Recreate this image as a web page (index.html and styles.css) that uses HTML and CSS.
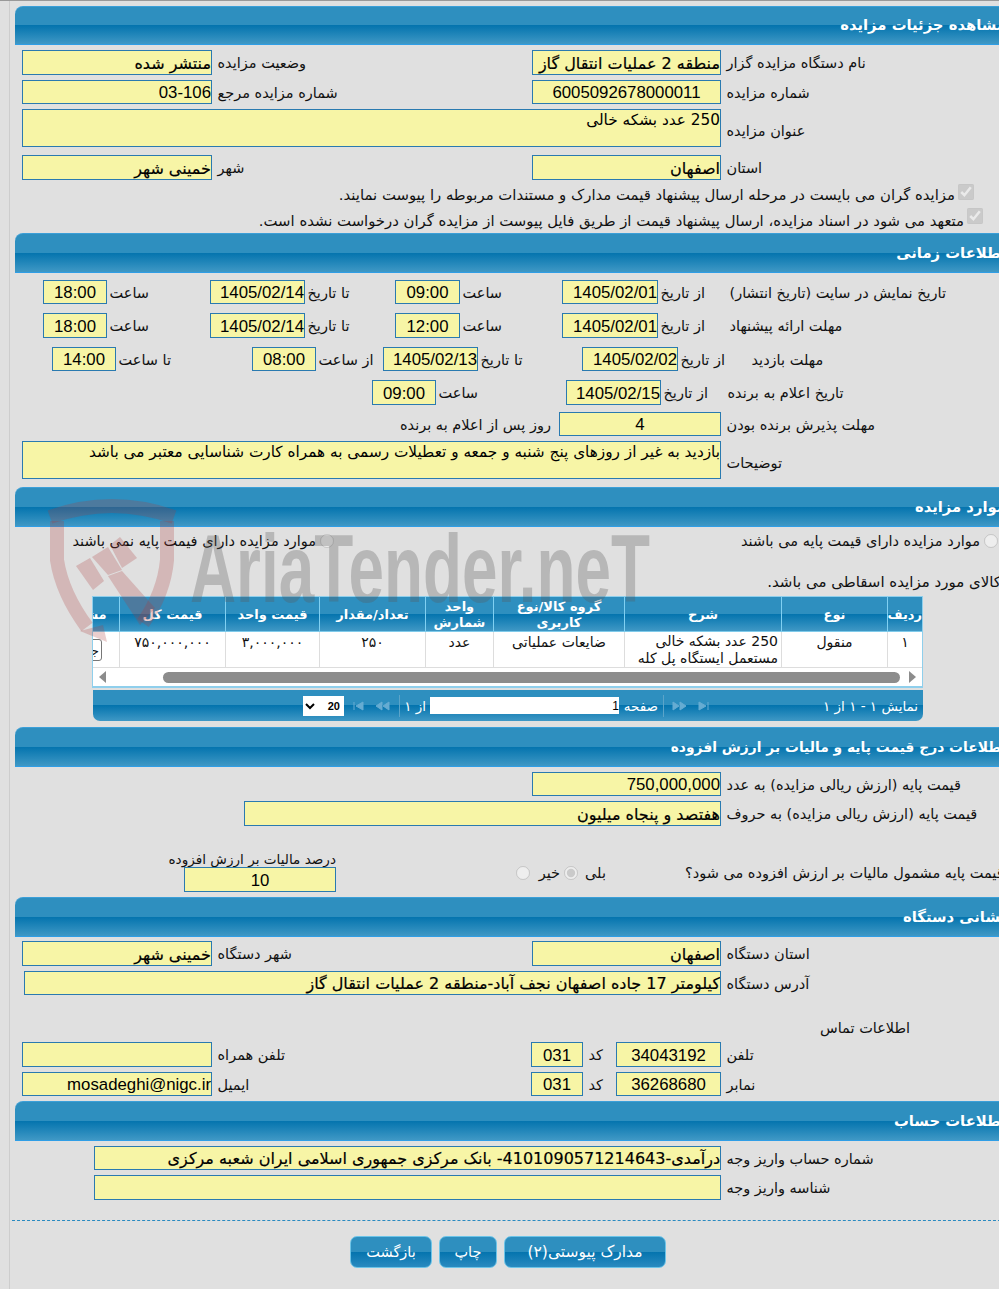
FILE: index.html
```html
<!DOCTYPE html>
<html lang="fa">
<head>
<meta charset="utf-8">
<title>مشاهده جزئیات مزایده</title>
<link rel="stylesheet" href="styles.css">
</head>
<body>
<div class="frame">
<main class="page">

<section class="sec sec1">
  <h2 class="hdr hdr1">مشاهده جزئیات مزایده</h2>
  <div class="row main h25 mt5"><div class="val fa bold">منتشر شده</div><label class="lb">وضعیت مزایده</label><div class="val fa bold">منطقه 2 عملیات انتقال گاز</div><label class="lb">نام دستگاه مزایده گزار</label></div>
  <div class="row main h24 mt5"><div class="val en">03-106</div><label class="lb">شماره مزایده مرجع</label><div class="val en c">6005092678000011</div><label class="lb">شماره مزایده</label></div>
  <div class="row wide h38 mt5"><div class="val fa top">250 عدد بشکه خالی</div><label class="lb low">عنوان مزایده</label></div>
  <div class="row main h25 mt8"><div class="val fa bold">خمینی شهر</div><label class="lb">شهر</label><div class="val fa bold">اصفهان</div><label class="lb">استان</label></div>
  <div class="chk chk1"><input type="checkbox" checked disabled><span>مزایده گران می بایست در مرحله ارسال پیشنهاد قیمت مدارک و مستندات مربوطه را پیوست نمایند.</span></div>
  <div class="chk chk2"><input type="checkbox" checked disabled><span>متعهد می شود در اسناد مزایده، ارسال پیشنهاد قیمت از طریق فایل پیوست از مزایده گران درخواست نشده است.</span></div>
</section>

<section class="sec">
  <h2 class="hdr">اطلاعات زمانی</h2>
  <div class="row t1 h24 mt7"><div class="val en c">18:00</div><label class="lb s">ساعت</label><div class="val en">1405/02/14</div><label class="lb s">تا تاریخ</label><div class="val en c">09:00</div><label class="lb s">ساعت</label><div class="val en">1405/02/01</div><label class="lb s">از تاریخ</label><label class="lb">تاریخ نمایش در سایت (تاریخ انتشار)</label></div>
  <div class="row t1 h25 mt9"><div class="val en c">18:00</div><label class="lb s">ساعت</label><div class="val en">1405/02/14</div><label class="lb s">تا تاریخ</label><div class="val en c">12:00</div><label class="lb s">ساعت</label><div class="val en">1405/02/01</div><label class="lb s">از تاریخ</label><label class="lb">مهلت ارائه پیشنهاد</label></div>
  <div class="row t3 h24 mt9"><div class="val en c">14:00</div><label class="lb s">تا ساعت</label><div class="val en c">08:00</div><label class="lb s">از ساعت</label><div class="val en">1405/02/13</div><label class="lb s">تا تاریخ</label><div class="val en">1405/02/02</div><label class="lb s">از تاریخ</label><label class="lb">مهلت بازدید</label></div>
  <div class="row t4 h25 mt9"><div class="val en c">09:00</div><label class="lb s">ساعت</label><div class="val en">1405/02/15</div><label class="lb s">از تاریخ</label><label class="lb">تاریخ اعلام به برنده</label></div>
  <div class="row t5 h24 mt7"><label class="lb right">روز پس از اعلام به برنده</label><div class="val en c">4</div><label class="lb">مهلت پذیرش برنده بودن</label></div>
  <div class="row wide h38 mt5"><div class="val fa top">بازدید به غیر از روزهای پنج شنبه و جمعه و تعطیلات رسمی به همراه کارت شناسایی معتبر می باشد</div><label class="lb low">توضیحات</label></div>
</section>

<section class="sec sec3">
  <h2 class="hdr">موارد مزایده</h2>
  <div class="radios"><span class="rd rd-no"><input type="radio" disabled><span>موارد مزایده دارای فیمت پایه نمی باشند</span></span><span class="rd rd-yes"><input type="radio" disabled><span>موارد مزایده دارای قیمت پایه می باشند</span></span></div>
  <p class="scrap">کالای مورد مزایده اسقاطی می باشد.</p>
  <div class="grid-wrap">
    <table class="grid">
      <colgroup><col class="c1"><col class="c2"><col class="c3"><col class="c4"><col class="c5"><col class="c6"><col class="c7"><col class="c8"><col class="c9"></colgroup>
      <thead><tr><th>ردیف</th><th>نوع</th><th>شرح</th><th>گروه کالا/نوع کاربری</th><th>واحد شمارش</th><th>تعداد/مقدار</th><th>قیمت واحد</th><th>قیمت کل</th><th>مشاهده</th></tr></thead>
      <tbody><tr><td>۱</td><td>منقول</td><td class="desc">250 عدد بشکه خالی مستعمل ایستگاه پل کله</td><td>ضایعات عملیاتی</td><td>عدد</td><td>۲۵۰</td><td>۳,۰۰۰,۰۰۰</td><td>۷۵۰,۰۰۰,۰۰۰</td><td class="act"><button class="mini" disabled>جزئیات</button></td></tr></tbody>
    </table>
    <div class="scroll"><i class="arr arr-l"></i><i class="thumb"></i><i class="arr arr-r"></i></div>
  </div>
  <div class="pager">
    <select class="psize" dir="rtl"><option>20</option></select>
    <svg class="pic p1" viewBox="0 0 37 10"><path d="M1 1v8M10 1 3 5l7 4zM29 1l-6 4 6 4zM36 1l-6 4 6 4z"/></svg>
    <i class="psep s1"></i>
    <span class="ptx of">از ۱</span>
    <input class="pnum" value="1" dir="rtl" readonly>
    <span class="ptx pg">صفحه</span>
    <i class="psep s2"></i>
    <svg class="pic p2" viewBox="0 0 40 10"><path d="m1 1 6 4-6 4zM8 1l6 4-6 4zM27 1l7 4-7 4zM36 1v8"/></svg>
    <span class="ptx info">نمایش ۱ - ۱ از ۱</span>
  </div>
</section>

<section class="sec sec4">
  <h2 class="hdr hdr-long">اطلاعات درج قیمت پایه و مالیات بر ارزش افزوده</h2>
  <div class="row r-num h24 mt5"><div class="val en">750,000,000</div><label class="lb">قیمت پایه (ارزش ریالی مزایده) به عدد</label></div>
  <div class="row r-word h25 mt5"><div class="val fa bold">هفتصد و پنجاه میلیون</div><label class="lb">قیمت پایه (ارزش ریالی مزایده) به حروف</label></div>
  <div class="taxrow">
    <div class="tax"><label class="taxl">درصد مالیات بر ارزش افزوده</label><div class="val en c taxv">10</div></div>
    <div class="yn"><input type="radio" name="vat" disabled><span class="no">خیر</span><input type="radio" name="vat" checked disabled><span class="yes">بلی</span></div>
    <label class="lb q">قیمت پایه مشمول مالیات بر ارزش افزوده می شود؟</label>
  </div>
</section>

<section class="sec sec5">
  <h2 class="hdr">نشانی دستگاه</h2>
  <div class="row main h25 mt4"><div class="val fa bold">خمینی شهر</div><label class="lb">شهر دستگاه</label><div class="val fa bold">اصفهان</div><label class="lb">استان دستگاه</label></div>
  <div class="row addr h24 mt5"><div class="val fa bold">کیلومتر 17 جاده اصفهان نجف آباد-منطقه 2 عملیات انتقال گاز</div><label class="lb">آدرس دستگاه</label></div>
  <p class="contact">اطلاعات تماس</p>
  <div class="row tel h25 mt4"><div class="val"></div><label class="lb">تلفن همراه</label><div class="val en c">031</div><label class="lb">کد</label><div class="val en c">34043192</div><label class="lb">تلفن</label></div>
  <div class="row tel h24 mt5"><div class="val en">mosadeghi@nigc.ir</div><label class="lb">ایمیل</label><div class="val en c">031</div><label class="lb">کد</label><div class="val en c">36268680</div><label class="lb">نمابر</label></div>
</section>

<section class="sec sec5">
  <h2 class="hdr">اطلاعات حساب</h2>
  <div class="row acc h24 mt5"><div class="val fa bold">درآمدی-4101090571214643- بانک مرکزی جمهوری اسلامی ایران شعبه مرکزی</div><label class="lb">شماره حساب واریز وجه</label></div>
  <div class="row acc h25 mt5"><div class="val"></div><label class="lb">شناسه واریز وجه</label></div>
</section>

<hr class="dash">
<nav class="btns"><button class="btn b1">بازگشت</button><button class="btn b2">چاپ</button><button class="btn b3">مدارک پیوستی(۲)</button></nav>
</main>

<svg class="mark" viewBox="0 0 620 150" aria-hidden="true">
  <path class="m-line" d="M17 26V65Q22 98 47 132"/>
  <path class="m-line" d="M127 26V65Q124 98 103 128"/>
  <path class="m-line" d="M10 22Q72 0 134 22"/>
  <path class="m-fill" d="M40 136 67 147 63 130Z"/>
  <path class="m-fill" d="M36 71 50 63 64 86 53 95Z"/>
  <path class="m-fill" d="M52 62 68 52 82 75 68 80Z"/>
  <path class="m-fill" d="M70 50 80 42 97 63 82 73Z"/>
  <path class="m-fill" d="M68 81 82 76 115 113 100 130Z"/>
  <text class="m-text" x="150" y="107" textLength="460" lengthAdjust="spacingAndGlyphs">AriaTender.neT</text>
</svg>
</div>
</body>
</html>
```
FILE: styles.css
```css
* { box-sizing: border-box; }
html, body { margin: 0; padding: 0; height: 100%; overflow: hidden; background: #e0e0e0; }
body { font-family: "DejaVu Sans", sans-serif; font-size: 14.5px; color: #111; }
.frame { position: relative; width: 999px; height: 1289px; overflow: hidden; border-top: 1px solid #999; }
.frame::before { content: ""; position: absolute; left: 9px; top: 0; bottom: 0; width: 1px; background: #cdcdcd; }
.page { position: relative; width: 1006px; padding-left: 15px; }

.sec1 { margin-top: 5px; }
.sec3 { margin-top: 8px; }
.sec4 { margin-top: 6px; }
.sec5 { margin-top: 5px; }

.hdr {
  margin: 0; height: 40px; padding: 9px 0 0; font-size: 14.8px; line-height: 20px; font-weight: bold; color: #fff;
  direction: rtl; text-align: right; white-space: nowrap;
  border-top: 1px solid #3b9fd8; border-bottom: 1px solid #2f9ee6; border-top-left-radius: 8px;
  background: linear-gradient(#2e8fbf 0, #2e8fbf 50%, #0474ae 50%, #3f98c5 100%);
}
.hdr1 { height: 39px; padding-top: 8px; }
.hdr-long { font-size: 13.85px; }

.row { display: grid; align-items: stretch; margin-left: -15px; }
.h24 { height: 24px; } .h25 { height: 25px; } .h38 { height: 38px; }
.mt4 { margin-top: 4px; } .mt5 { margin-top: 5px; } .mt7 { margin-top: 7px; } .mt8 { margin-top: 8px; } .mt9 { margin-top: 9px; }

.main { padding-left: 22px; grid-template-columns: 190px 320px 189px 1fr; }
.wide { padding-left: 22px; grid-template-columns: 699px 1fr; }
.t1 { padding-left: 43px; grid-template-columns: 64px 103px 95px 90px 65px 102px 96px 66px 1fr; }
.t3 { padding-left: 52px; grid-template-columns: 64px 136px 64px 67px 95px 104px 96px 68px 1fr; }
.t4 { padding-left: 372px; grid-template-columns: 64px 130px 95px 61px 1fr; }
.t5 { padding-left: 402px; grid-template-columns: 157px 162px 1fr; }
.r-num { padding-left: 532px; grid-template-columns: 189px 1fr; }
.r-word { padding-left: 244px; grid-template-columns: 477px 1fr; }
.addr { padding-left: 24px; grid-template-columns: 697px 1fr; }
.tel { padding-left: 22px; grid-template-columns: 190px 319px 52px 33px 105px 1fr; }
.acc { padding-left: 94px; grid-template-columns: 627px 1fr; }

.val {
  direction: rtl; display: flex; align-items: center; justify-content: flex-start; overflow: hidden; white-space: nowrap;
  background: #f7f5a6; border: 1px solid #2a7ab0; color: #000; line-height: 1;
}
.en { font-family: "Liberation Sans", sans-serif; font-size: 16.8px; padding-top: 3px; }
.fa { font-size: 15.3px; }
.bold { font-size: 16px; padding-top: 2px; -webkit-text-stroke: 0.2px #000; }
.c { justify-content: center; }
.top { align-items: flex-start; padding-top: 3px; }
.lb { direction: rtl; text-align: left; align-self: center; padding: 1px 0 0 5.5px; white-space: nowrap; font-size: 14.5px; line-height: 18px; }
.lb.s { padding-left: 2.5px; }
.lb.right { text-align: right; padding: 1px 8px 0 0; }
.lb.low { padding-top: 6px; }

.chk { display: flex; direction: rtl; align-items: center; white-space: nowrap; margin-left: -15px; font-size: 14.85px; }
.chk input { width: 16px; height: 16px; margin: 0; }
.chk1 { height: 26px; margin-top: 2px; padding-right: 32px; }
.chk1 input { margin-bottom: 6px; }
.chk1 span { margin-right: 3px; }
.chk2 { height: 25px; padding-right: 23px; }
.chk2 input { margin-bottom: 9px; }
.chk2 span { margin-right: 3px; }

.radios { display: flex; height: 20px; margin: 4px 0 1px -15px; padding-left: 68px; align-items: center; }
.rd { display: flex; direction: rtl; align-items: center; white-space: nowrap; }
.rd input { margin: 0 0 0 4px; width: 14px; height: 14px; }
.rd-no { width: 266px; }
.rd-yes { margin-left: 407px; }
.scrap { margin: 21px 0 0; height: 20px; padding-right: 5px; line-height: 20px; font-size: 15px; direction: rtl; text-align: right; white-space: nowrap; }

.grid-wrap { direction: rtl; margin: 4px 0 0 77px; width: 831px; border: 1px solid #8fcfec; border-width: 1px 1px 0 1px; overflow: hidden; background: #fff; }
.grid { border-collapse: separate; border-spacing: 0; table-layout: fixed; width: 879px; }
.c1 { width: 35px; } .c2 { width: 106px; } .c3 { width: 157px; } .c4 { width: 131px; } .c5 { width: 68px; }
.c6 { width: 106px; } .c7 { width: 94px; } .c8 { width: 106px; } .c9 { width: 76px; }
.grid th {
  height: 35px; padding: 1px 3px 0; color: #fff; font-size: 13px; line-height: 16px; font-weight: bold; text-align: center;
  border-left: 1px solid #80d0f2; border-bottom: 1px solid #7fcaea; background: linear-gradient(#2e8fbf 0, #2e8fbf 50%, #0474ae 50%, #3f98c5 100%);
}
.grid th:first-child { padding: 1px 0 0 4px; }
.grid td { height: 35px; padding: 2px 3px 0; font-size: 14px; line-height: 17px; text-align: center; vertical-align: top; border-left: 1px solid #ddd; border-bottom: 1px solid #ddd; background: #fff; }
.grid td.desc { text-align: right; padding-top: 1px; }
.grid td.act { text-align: right; padding: 0; }
.mini { height: 22px; width: 60px; margin: 7px 17px 0 0; padding: 0 2px 0 0; font: 13px "DejaVu Sans", sans-serif; text-align: right; background: #fff; border: 1px solid #777; border-radius: 3px; color: #111; }
.scroll { direction: ltr; display: flex; align-items: center; height: 20px; background: #fff; border-bottom: 2px solid #8fcfec; }
.arr { width: 0; height: 0; border-style: solid; border-color: transparent; border-width: 6px 0 6px 7px; }
.arr-l { border-width: 6px 7px 6px 0; border-right-color: #8c8c8c; margin-left: 6px; }
.thumb { width: 737px; height: 11px; margin-left: 57px; background: #8c8c8c; border-radius: 6px; }
.arr-r { border-left-color: #8c8c8c; margin-left: 9px; }

.pager { display: flex; align-items: center; margin: 2px 0 0 78px; width: 830px; height: 31px; padding-left: 210px; border-radius: 0 0 7px 7px; background: linear-gradient(#2e8fbf 0, #2e8fbf 50%, #0474ae 50%, #3f98c5 100%); color: #fff; }
.psize { width: 41px; height: 20px; font: bold 11px "Liberation Sans", sans-serif; background: #fff; border: 0; padding: 0; color: #000; }
.pic { width: 37px; height: 10px; margin-left: 9px; fill: #66acd2; stroke: #66acd2; stroke-width: 1; }
.psep { width: 1px; height: 22px; background: #5ba4c9; }
.s1 { margin-left: 9px; }
.ptx { direction: rtl; font-size: 13.5px; white-space: nowrap; }
.of { margin-left: 5px; width: 25px; padding-right: 4px; }
.pnum { width: 189px; height: 17px; padding: 0; border: 0; background: #fff; font: 12px "Liberation Sans", sans-serif; text-align: right; }
.pg { width: 35px; margin-left: 4px; }
.s2 { margin-left: 5px; }
.p2 { width: 40px; margin-left: 8px; }
.info { margin-left: 111px; }

.taxrow { display: flex; margin: 25px 0 0 -15px; height: 41px; padding-left: 168px; align-items: center; }
.tax { width: 168px; display: flex; flex-direction: column; align-items: flex-end; }
.taxl { direction: rtl; height: 16px; line-height: 16px; font-size: 13.6px; white-space: nowrap; }
.taxv { width: 152px; height: 25px; }
.yn { display: flex; align-items: center; margin-left: 180px; width: 169px; padding-top: 2px; }
.yn input { margin: 0; width: 14px; height: 14px; }
.no { margin: 0 4px 0 8px; width: 22px; direction: rtl; }
.yes { margin-left: 7px; direction: rtl; }
.lb.q { padding: 2px 0 0; }

.contact { margin: 23px 0 0 805px; height: 20px; line-height: 20px; direction: rtl; text-align: left; }

.dash { margin: 20px 0 0 -3px; height: 0; border: 0; border-top: 1px dashed #2a8ac0; }
.btns { display: flex; margin: 15px 0 0 335px; gap: 7px; }
.btn { height: 32px; padding: 0; color: #fff; font: 14.5px "DejaVu Sans", sans-serif; border: 1px solid #6cc4e8; border-radius: 7px; background: linear-gradient(#2e8fbf 0, #2e8fbf 50%, #0474ae 50%, #2a8ac0 100%); }
.b1 { width: 82px; } .b2 { width: 58px; } .b3 { width: 162px; font-size: 15.5px; }

.mark { position: absolute; left: 40px; top: 494px; width: 620px; height: 150px; pointer-events: none; overflow: visible; }
.m-line { fill: none; stroke: rgba(170, 60, 60, .25); stroke-width: 14; }
.m-fill { fill: rgba(170, 60, 60, .25); }
.m-text { font-family: "Liberation Sans", sans-serif; font-weight: bold; font-size: 96px; fill: rgba(90, 90, 90, .3); }
```
